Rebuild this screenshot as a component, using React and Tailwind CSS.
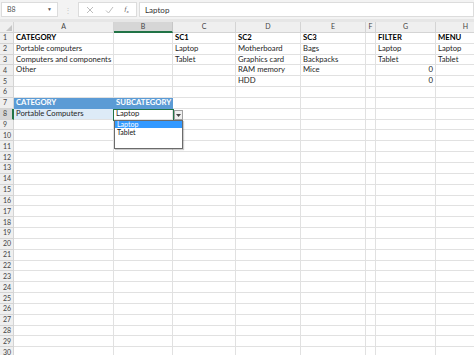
import React from "react";

const cols = [
  { k: "A", w: 100 },
  { k: "B", w: 59 },
  { k: "C", w: 63 },
  { k: "D", w: 65 },
  { k: "E", w: 65 },
  { k: "F", w: 10 },
  { k: "G", w: 60 },
  { k: "H", w: 60 },
];

const data = {
  1: { A: ["CATEGORY", "b"], C: ["SC1", "b"], D: ["SC2", "b"], E: ["SC3", "b"], G: ["FILTER", "b"], H: ["MENU", "b"] },
  2: { A: ["Portable computers"], C: ["Laptop"], D: ["Motherboard"], E: ["Bags"], G: ["Laptop"], H: ["Laptop"] },
  3: { A: ["Computers and components"], C: ["Tablet"], D: ["Graphics card"], E: ["Backpacks"], G: ["Tablet"], H: ["Tablet"] },
  4: { A: ["Other"], D: ["RAM memory"], E: ["Mice"], G: ["0", "r"] },
  5: { D: ["HDD"], G: ["0", "r"] },
  7: { A: ["CATEGORY", "h"], B: ["SUBCATEGORY", "h"] },
  8: { A: ["Portable Computers", "l"], B: ["Laptop", "s"] },
};

const rows = Array.from({ length: 30 }, (_, i) => i + 1);

function Cell({ row, col }) {
  const d = data[row] && data[row][col.k];
  let cls = "border-r border-b border-[#e1e1e1] px-[2px] flex items-center overflow-visible whitespace-nowrap text-[#262626]";
  if (d && d[1] === "h") cls = "border-r border-b border-[#5b9bd5] bg-[#5b9bd5] px-[2px] flex items-center whitespace-nowrap text-white font-bold";
  if (d && d[1] === "l") cls = "border-r border-b border-[#e1e1e1] bg-[#ddebf7] px-[2px] flex items-center whitespace-nowrap text-[#262626]";
  if (d && d[1] === "b") cls += " font-bold text-black";
  if (d && d[1] === "r") cls += " justify-end";
  return <div className={cls}>{d ? d[0] : ""}</div>;
}

export default function App() {
  return (
    <div className="w-[474px] h-[355px] overflow-hidden bg-white relative" style={{ fontFamily: "Lato, 'Open Sans', sans-serif" }}>
      {/* top bar */}
      <div className="h-[19px] bg-[#f3f3f3] flex items-center gap-[2px] pt-[2px] pb-[2px]">
        <div className="w-[57px] h-[15px] bg-white border border-[#dcdcdc] ml-[1px] flex items-center justify-between px-[5px] text-[7px] text-[#555]">
          <span>B8</span>
          <span className="text-[5px] text-[#555]">▼</span>
        </div>
        <div className="w-[16px] flex justify-center text-[#c8c8c8] text-[8px]">⋮</div>
        <div className="w-[59px] h-[15px] bg-white border border-[#dcdcdc] flex items-center justify-around px-[2px]">
          <svg width="8" height="8" viewBox="0 0 8 8"><path d="M1 1L7 7M7 1L1 7" stroke="#bdbdbd" strokeWidth="1" /></svg>
          <svg width="9" height="8" viewBox="0 0 9 8"><path d="M1 4.5L3.5 7L8 1" stroke="#bdbdbd" strokeWidth="1" fill="none" /></svg>
          <span className="text-[7px] italic text-[#555]" style={{ fontFamily: "'Liberation Serif', serif" }}>f<sub className="text-[5px]">x</sub></span>
        </div>
        <div className="flex-1 h-[15px] bg-white border border-[#dcdcdc] flex items-center px-[5px] text-[8px] text-[#333]">Laptop</div>
      </div>
      <div className="h-[3px] bg-[#e6e6e6]" />

      {/* grid */}
      <div
        className="grid text-[7.7px] leading-none"
        style={{ gridTemplateColumns: "14px 100px 59px 63px 65px 65px 10px 60px 60px", gridAutoRows: "10.85px" }}
      >
        <div className="bg-[#efefef] border-r border-b border-[#d4d4d4] relative">
          <svg className="absolute right-[1px] bottom-[1px]" width="6" height="6" viewBox="0 0 6 6"><path d="M6 0L6 6L0 6Z" fill="#c6c6c6" /></svg>
        </div>
        {cols.map((c) =>
          c.k === "B" ? (
            <div key={c.k} className="bg-[#d6d6d6] border-r border-[#c6c6c6] border-b-2 border-b-[#217346] flex items-center justify-center text-[7px] text-[#444]">{c.k}</div>
          ) : (
            <div key={c.k} className="bg-[#efefef] border-r border-b border-[#d4d4d4] flex items-center justify-center text-[7px] text-[#444]">{c.k}</div>
          )
        )}
        {rows.map((r) => (
          <React.Fragment key={r}>
            <div className={`${r === 8 ? "bg-[#d6d6d6] border-r-2 border-r-[#217346]" : "bg-[#efefef] border-r border-[#d4d4d4]"} border-b border-b-[#d4d4d4] flex items-center pl-[3px] text-[7px] text-[#444]`}>{r}</div>
            {cols.map((c) => (
              <Cell key={c.k} row={r} col={c} />
            ))}
          </React.Fragment>
        ))}
      </div>

      {/* active cell border */}
      <div className="absolute left-[113px] top-[109px] w-[61px] h-[12px] border-[1.5px] border-[#217346] pointer-events-none" />
      {/* dropdown arrow button */}
      <div className="absolute left-[174px] top-[110px] w-[9px] h-[10px] bg-[#f0f0f0] border border-[#a0a0a0] flex items-center justify-center">
        <svg width="5" height="3" viewBox="0 0 5 3"><path d="M0 0H5L2.5 3Z" fill="#444" /></svg>
      </div>
      {/* dropdown list */}
      <div className="absolute left-[114px] top-[120px] w-[69px] h-[29px] bg-white border border-[#6b6b6b] text-[7px] leading-[7px] shadow-[1px_1px_1px_rgba(0,0,0,0.2)]">
        <div className="bg-[#3399ff] text-white px-[2px] h-[7px] flex items-center">Laptop</div>
        <div className="text-[#111] px-[2px] h-[8px] flex items-center">Tablet</div>
      </div>
    </div>
  );
}
